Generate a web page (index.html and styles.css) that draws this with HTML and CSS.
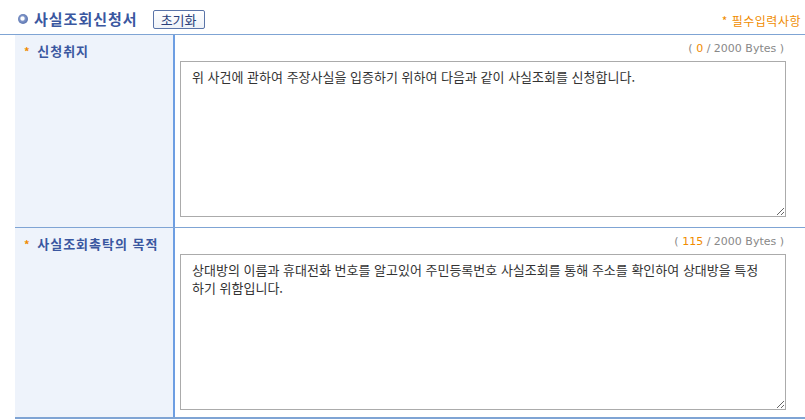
FILE: index.html
```html
<!DOCTYPE html>
<html lang="ko">
<head>
  <meta charset="UTF-8" />
  <title>사실조회신청서</title>
  <link rel="stylesheet" href="styles.css">
</head>
<body>

<!-- Title bar -->
<div class="title-bar">
  <div class="title-left">
    <span class="bullet"></span>
    <h2>사실조회신청서</h2>
    <button class="reset-btn">초기화</button>
  </div>
  <span class="required">* 필수입력사항</span>
</div>

<!-- Form table -->
<div class="form-table">
  <div class="form-row">
    <div class="form-label"><span class="star">*</span> 신청취지</div>
    <div class="form-field">
      <div class="counter">( <span class="num">0</span> / 2000 Bytes )</div>
      <textarea>위 사건에 관하여 주장사실을 입증하기 위하여 다음과 같이 사실조회를 신청합니다.</textarea>
    </div>
  </div>
  <div class="form-row">
    <div class="form-label"><span class="star">*</span> 사실조회촉탁의 목적</div>
    <div class="form-field">
      <div class="counter">( <span class="num">115</span> / 2000 Bytes )</div>
      <textarea>상대방의 이름과 휴대전화 번호를 알고있어 주민등록번호 사실조회를 통해 주소를 확인하여 상대방을 특정하기 위함입니다.</textarea>
    </div>
  </div>
</div>

</body>
</html>
```

FILE: styles.css
```css
body {
  margin: 0;
  padding: 0 0 0 15px;
  font-family: 'Noto Sans CJK KR', 'Liberation Sans', sans-serif;
  font-size: 12px;
  color: #333;
  background: #fff;
  overflow: hidden;
}

.title-bar {
  display: flex;
  justify-content: space-between;
  align-items: flex-end;
  height: 35px;
  box-sizing: border-box;
  padding-bottom: 6px;
  margin-left: -15px;
  padding-left: 18px;
  padding-right: 4px;
  border-bottom: 1px solid #7fa4d4;
}

.title-left {
  display: flex;
  align-items: center;
  align-self: flex-start;
  margin-top: 9px;
}

.bullet {
  width: 10px;
  height: 10px;
  border-radius: 50%;
  background: radial-gradient(circle at 45% 45%, #ffffff 0, #ffffff 20%, #7f95c8 35%, #3d5a9c 100%);
  margin-right: 6px;
}

.title-left h2 {
  margin: 0;
  font-size: 15px;
  font-weight: bold;
  color: #3a57a0;
  letter-spacing: 1px;
  line-height: 20px;
}

.reset-btn {
  margin-left: 15px;
  height: 19px;
  width: 52px;
  padding: 0;
  font-family: inherit;
  font-size: 13px;
  line-height: 15px;
  color: #2a3f7a;
  background: linear-gradient(#ffffff, #eef2f8);
  border: 1px solid #5a74a8;
  border-radius: 2px;
}

.required {
  color: #f08c00;
  font-size: 12px;
  line-height: 14px;
  letter-spacing: 0.5px;
}

.form-row {
  display: flex;
  border-bottom: 1px solid #7fa4d4;
}

.form-row:first-child {
  height: 192px;
}

.form-row:last-child {
  height: 189px;
  border-bottom-width: 2px;
}

.form-label {
  width: 160px;
  flex-shrink: 0;
  background: #eef3fb;
  border-right: 2px solid #6d9ee2;
  padding: 8px 0 0 9px;
  box-sizing: border-box;
  font-size: 13px;
  font-weight: bold;
  color: #3a57a0;
  line-height: 16px;
  letter-spacing: 1px;
}

.star {
  color: #f08c00;
  font-size: 11px;
  margin-right: 2px;
}

.form-field {
  flex: 1;
  padding: 6px 20px 0 5px;
}

.counter {
  text-align: right;
  font-family: 'DejaVu Sans', 'Noto Sans CJK KR', sans-serif;
  font-size: 11px;
  color: #888;
  line-height: 16px;
  padding-right: 2px;
  margin-bottom: 4px;
}

.counter .num {
  color: #f08c00;
}

textarea {
  display: block;
  width: 606px;
  height: 156px;
  box-sizing: border-box;
  padding: 6px 20px 6px 11px;
  font-family: 'Noto Sans CJK KR', sans-serif;
  font-size: 13px;
  line-height: 18px;
  color: #333;
  border: 1px solid #ababab;
  resize: both;
}
```
